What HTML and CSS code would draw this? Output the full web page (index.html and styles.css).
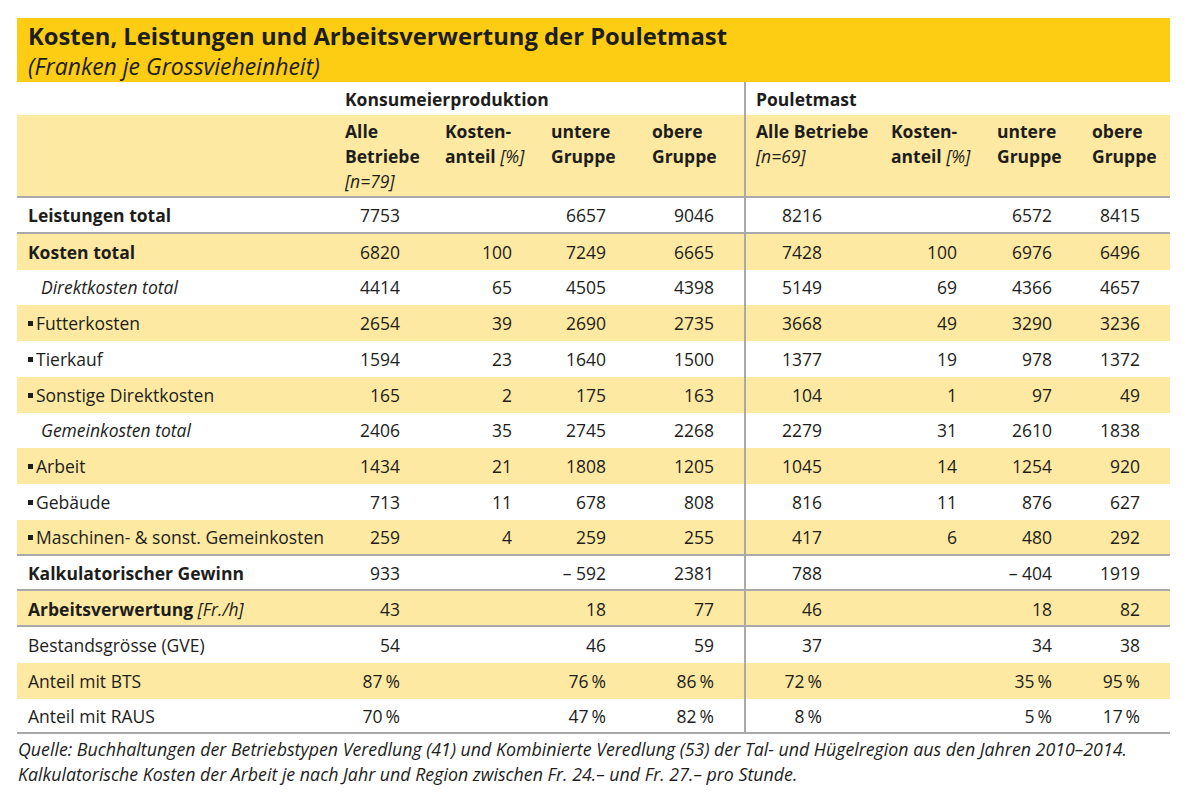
FILE: index.html
```html
<!DOCTYPE html>
<html lang="de">
<head>
<meta charset="utf-8">
<title>Kosten, Leistungen und Arbeitsverwertung der Pouletmast</title>
<link rel="stylesheet" href="styles.css">
</head>
<body>
<div class="page">
  <div class="title-band">
    <h1 class="title">Kosten, Leistungen und Arbeitsverwertung der Pouletmast</h1>
    <p class="subtitle">(Franken je Grossvieheinheit)</p>
  </div>
  <table class="data">
    <colgroup>
      <col class="w-label"><col class="w-c1"><col class="w-c2"><col class="w-c3"><col class="w-c4"><col class="w-c5"><col class="w-c6"><col class="w-c7"><col class="w-c8">
    </colgroup>
    <thead>
      <tr class="group-row">
        <th></th>
        <th colspan="4" class="group">Konsumeierproduktion</th>
        <th colspan="4" class="group sep">Pouletmast</th>
      </tr>
      <tr class="head-row">
        <th></th>
        <th>Alle<br>Betriebe<br><i>[n=79]</i></th>
        <th>Kosten-<br>anteil <i>[%]</i></th>
        <th>untere<br>Gruppe</th>
        <th>obere<br>Gruppe</th>
        <th class="sep">Alle Betriebe<br><i>[n=69]</i></th>
        <th>Kosten-<br>anteil <i>[%]</i></th>
        <th>untere<br>Gruppe</th>
        <th>obere<br>Gruppe</th>
      </tr>
    </thead>
    <tbody>
      <tr class="line">
        <td class="lbl strong">Leistungen total</td>
        <td class="c1">7753</td><td class="c2"></td><td class="c3">6657</td><td class="c4">9046</td>
        <td class="c5 sep">8216</td><td class="c6"></td><td class="c7">6572</td><td class="c8">8415</td>
      </tr>
      <tr class="hl">
        <td class="lbl strong">Kosten total</td>
        <td class="c1">6820</td><td class="c2">100</td><td class="c3">7249</td><td class="c4">6665</td>
        <td class="c5 sep">7428</td><td class="c6">100</td><td class="c7">6976</td><td class="c8">6496</td>
      </tr>
      <tr>
        <td class="lbl sub">Direktkosten total</td>
        <td class="c1">4414</td><td class="c2">65</td><td class="c3">4505</td><td class="c4">4398</td>
        <td class="c5 sep">5149</td><td class="c6">69</td><td class="c7">4366</td><td class="c8">4657</td>
      </tr>
      <tr class="hl">
        <td class="lbl item">Futterkosten</td>
        <td class="c1">2654</td><td class="c2">39</td><td class="c3">2690</td><td class="c4">2735</td>
        <td class="c5 sep">3668</td><td class="c6">49</td><td class="c7">3290</td><td class="c8">3236</td>
      </tr>
      <tr>
        <td class="lbl item">Tierkauf</td>
        <td class="c1">1594</td><td class="c2">23</td><td class="c3">1640</td><td class="c4">1500</td>
        <td class="c5 sep">1377</td><td class="c6">19</td><td class="c7">978</td><td class="c8">1372</td>
      </tr>
      <tr class="hl">
        <td class="lbl item">Sonstige Direktkosten</td>
        <td class="c1">165</td><td class="c2">2</td><td class="c3">175</td><td class="c4">163</td>
        <td class="c5 sep">104</td><td class="c6">1</td><td class="c7">97</td><td class="c8">49</td>
      </tr>
      <tr>
        <td class="lbl sub">Gemeinkosten total</td>
        <td class="c1">2406</td><td class="c2">35</td><td class="c3">2745</td><td class="c4">2268</td>
        <td class="c5 sep">2279</td><td class="c6">31</td><td class="c7">2610</td><td class="c8">1838</td>
      </tr>
      <tr class="hl">
        <td class="lbl item">Arbeit</td>
        <td class="c1">1434</td><td class="c2">21</td><td class="c3">1808</td><td class="c4">1205</td>
        <td class="c5 sep">1045</td><td class="c6">14</td><td class="c7">1254</td><td class="c8">920</td>
      </tr>
      <tr>
        <td class="lbl item">Gebäude</td>
        <td class="c1">713</td><td class="c2">11</td><td class="c3">678</td><td class="c4">808</td>
        <td class="c5 sep">816</td><td class="c6">11</td><td class="c7">876</td><td class="c8">627</td>
      </tr>
      <tr class="hl line">
        <td class="lbl item">Maschinen- &amp; sonst. Gemeinkosten</td>
        <td class="c1">259</td><td class="c2">4</td><td class="c3">259</td><td class="c4">255</td>
        <td class="c5 sep">417</td><td class="c6">6</td><td class="c7">480</td><td class="c8">292</td>
      </tr>
      <tr class="line">
        <td class="lbl strong">Kalkulatorischer Gewinn</td>
        <td class="c1">933</td><td class="c2"></td><td class="c3">–&nbsp;592</td><td class="c4">2381</td>
        <td class="c5 sep">788</td><td class="c6"></td><td class="c7">–&nbsp;404</td><td class="c8">1919</td>
      </tr>
      <tr class="hl line">
        <td class="lbl"><b>Arbeitsverwertung</b> <i>[Fr./h]</i></td>
        <td class="c1">43</td><td class="c2"></td><td class="c3">18</td><td class="c4">77</td>
        <td class="c5 sep">46</td><td class="c6"></td><td class="c7">18</td><td class="c8">82</td>
      </tr>
      <tr>
        <td class="lbl">Bestandsgrösse (GVE)</td>
        <td class="c1">54</td><td class="c2"></td><td class="c3">46</td><td class="c4">59</td>
        <td class="c5 sep">37</td><td class="c6"></td><td class="c7">34</td><td class="c8">38</td>
      </tr>
      <tr class="hl">
        <td class="lbl">Anteil mit BTS</td>
        <td class="c1">87&#8201;%</td><td class="c2"></td><td class="c3">76&#8201;%</td><td class="c4">86&#8201;%</td>
        <td class="c5 sep">72&#8201;%</td><td class="c6"></td><td class="c7">35&#8201;%</td><td class="c8">95&#8201;%</td>
      </tr>
      <tr class="line">
        <td class="lbl">Anteil mit RAUS</td>
        <td class="c1">70&#8201;%</td><td class="c2"></td><td class="c3">47&#8201;%</td><td class="c4">82&#8201;%</td>
        <td class="c5 sep">8&#8201;%</td><td class="c6"></td><td class="c7">5&#8201;%</td><td class="c8">17&#8201;%</td>
      </tr>
    </tbody>
  </table>
  <p class="footnote">Quelle: Buchhaltungen der Betriebstypen Veredlung (41) und Kombinierte Veredlung (53) der Tal- und Hügelregion aus den Jahren 2010–2014.<br>Kalkulatorische Kosten der Arbeit je nach Jahr und Region zwischen Fr. 24.– und Fr. 27.– pro Stunde.</p>
</div>
</body>
</html>
```

FILE: styles.css
```css
html, body {
  margin: 0;
  background: #ffffff;
}

body {
  font-family: "Open Sans", Lato, sans-serif;
  color: #1d1d1b;
}

.page {
  width: 1153px;
  padding: 18px 0 0 17px;
}

.title-band {
  background: #fccd12;
  height: 64px;
  box-sizing: border-box;
  padding: 3px 11px 0;
  overflow: hidden;
}

.title {
  margin: 0;
  font-size: 23.8px;
  font-weight: 700;
  line-height: 31px;
}

.subtitle {
  margin: 0;
  font-size: 23px;
  font-style: italic;
  line-height: 29px;
}

.data {
  width: 1153px;
  border-collapse: separate;
  border-spacing: 0;
  table-layout: fixed;
  font-size: 17.5px;
}

.w-label { width: 318px; }
.w-c1 { width: 100px; }
.w-c2 { width: 106px; }
.w-c3 { width: 101px; }
.w-c4 { width: 102px; }
.w-c5 { width: 137px; }
.w-c6 { width: 106px; }
.w-c7 { width: 95px; }
.w-c8 { width: 88px; }

.data th, .data td {
  padding: 0 10px;
  box-sizing: border-box;
}

.group-row th {
  height: 33px;
  text-align: left;
  font-weight: 700;
  vertical-align: middle;
  padding-top: 1px;
}

.head-row th {
  height: 83px;
  background: #fee9a2;
  text-align: left;
  font-weight: 700;
  vertical-align: top;
  line-height: 25px;
  padding-top: 4px;
  border-bottom: 2px solid #a9a9a9;
}

.data i {
  font-weight: 400;
  font-style: italic;
}

.data tbody td {
  height: 35.75px;
  line-height: 20px;
  text-align: right;
  white-space: nowrap;
  padding-bottom: 0;
}

.data tbody tr.hl td {
  background: #fee9a2;
}

.data tbody tr.line td {
  border-bottom: 2px solid #a9a9a9;
  padding-top: 1px;
}

.data tbody td.lbl {
  text-align: left;
  padding-left: 11px;
}

.data tbody td.lbl.strong {
  font-weight: 700;
}

.data tbody td.lbl.sub {
  font-style: italic;
  padding-left: 24px;
}

.lbl.item::before {
  content: "";
  display: inline-block;
  width: 5px;
  height: 5px;
  background: #1d1d1b;
  margin-right: 3px;
  vertical-align: 4px;
}

.data td.c1 { padding-right: 35px; }
.data td.c2 { padding-right: 29px; }
.data td.c3 { padding-right: 36px; }
.data td.c4 { padding-right: 30px; }
.data td.c5 { padding-right: 59px; }
.data td.c6 { padding-right: 30px; }
.data td.c7 { padding-right: 30px; }
.data td.c8 { padding-right: 30px; }

.data .sep {
  border-left: 2px solid #a9a9a9;
}

.footnote {
  margin: 0;
  padding: 3px 0 0 1px;
  font-size: 17.8px;
  font-style: italic;
  line-height: 25px;
}
```
